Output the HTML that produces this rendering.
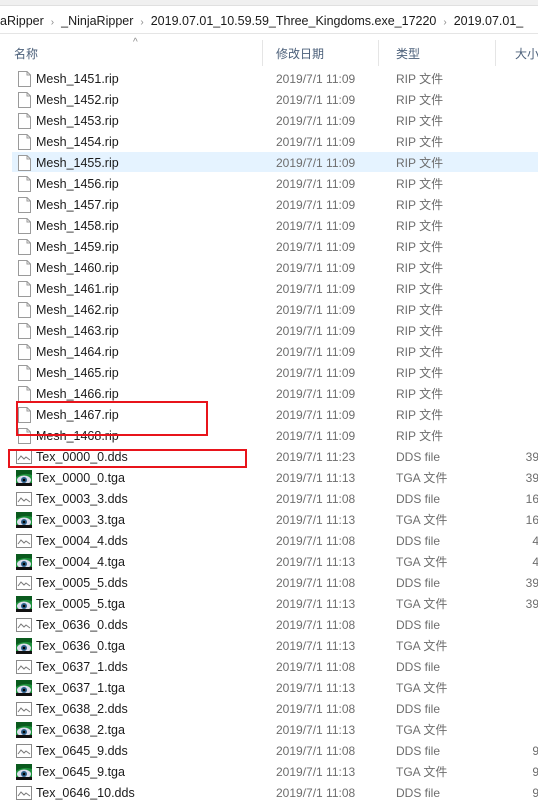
<!DOCTYPE html>
<html><head><meta charset="utf-8"><style>
body{margin:0;width:538px;height:807px;overflow:hidden;background:#fff;font-family:"Liberation Sans","Noto Sans CJK SC",sans-serif;font-size:12px;color:#1a1a1a;position:relative}
.a{position:absolute;white-space:nowrap;line-height:16px}
.r{position:absolute;left:0;width:538px;height:21px}
.n{position:absolute;left:36px;top:3px;line-height:16px;font-size:12.5px}
.d{position:absolute;left:276px;top:3px;color:#6d6d6d;line-height:16px}
.t{position:absolute;left:396px;top:3px;color:#6d6d6d;line-height:16px}
.s{position:absolute;right:-1px;top:3px;color:#6d6d6d;line-height:16px}
.ic{position:absolute;left:18px;top:3px;width:13px;height:16px}
.sep{position:absolute;top:40px;width:1px;height:26px;background:#e5e5e5}
.ch{color:#888;margin:0 7px;font-size:10px}
</style></head><body>
<div style="position:absolute;left:0;top:0;width:538px;height:5px;background:#f0f0f0;border-bottom:1px solid #e0e0e0"></div>
<div class="a" style="left:0;top:13px;font-size:12.5px">aRipper<span class="ch">›</span>_NinjaRipper<span class="ch">›</span>2019.07.01_10.59.59_Three_Kingdoms.exe_17220<span class="ch">›</span>2019.07.01_</div>
<div style="position:absolute;left:0;top:33px;width:538px;height:1px;background:#e5e5e5"></div>
<div class="a" style="left:133px;top:35px;color:#888;font-size:10px">^</div>
<div class="a" style="left:14px;top:46px;color:#4c607a">名称</div>
<div class="a" style="left:276px;top:46px;color:#4c607a">修改日期</div>
<div class="a" style="left:396px;top:46px;color:#4c607a">类型</div>
<div class="a" style="left:515px;top:46px;color:#4c607a">大小</div>
<div class="sep" style="left:262px"></div><div class="sep" style="left:378px"></div><div class="sep" style="left:495px"></div>
<div style="position:absolute;left:12px;top:152px;width:526px;height:20px;background:#e5f3ff"></div>
<svg width="0" height="0" style="position:absolute"><defs>
<symbol id="f" viewBox="0 0 13 16"><path d="M0.5 0.5H9L12.5 4V15.5H0.5Z" fill="#fff" stroke="#9a9a9a"/><path d="M9 0.5V4H12.5" fill="none" stroke="#9a9a9a"/></symbol>
<symbol id="g" viewBox="0 0 16 16"><rect x="0.5" y="1.5" width="15" height="13" fill="#fff" stroke="#8a8a8a"/><path d="M2 11L5 7L8 10L10 8L14 11" fill="none" stroke="#777"/></symbol>
<symbol id="e" viewBox="0 0 16 16"><rect width="16" height="16" fill="#1d8f3a"/><path d="M0 0H16V5Q8 2 0 7Z" fill="#0a5a1e"/><ellipse cx="8" cy="10" rx="7" ry="4.5" fill="#dde"/><circle cx="8" cy="10" r="3" fill="#2a5f8a"/><circle cx="8" cy="10" r="1.3" fill="#000"/><rect x="0" y="13" width="16" height="3" fill="#111"/></symbol>
</defs></svg>
<div id="rows">
<div class="r" style="top:68px"><svg class="ic"><use href="#f"/></svg><span class="n">Mesh_1451.rip</span><span class="d">2019/7/1 11:09</span><span class="t">RIP 文件</span></div>
<div class="r" style="top:89px"><svg class="ic"><use href="#f"/></svg><span class="n">Mesh_1452.rip</span><span class="d">2019/7/1 11:09</span><span class="t">RIP 文件</span></div>
<div class="r" style="top:110px"><svg class="ic"><use href="#f"/></svg><span class="n">Mesh_1453.rip</span><span class="d">2019/7/1 11:09</span><span class="t">RIP 文件</span></div>
<div class="r" style="top:131px"><svg class="ic"><use href="#f"/></svg><span class="n">Mesh_1454.rip</span><span class="d">2019/7/1 11:09</span><span class="t">RIP 文件</span></div>
<div class="r" style="top:152px"><svg class="ic"><use href="#f"/></svg><span class="n">Mesh_1455.rip</span><span class="d">2019/7/1 11:09</span><span class="t">RIP 文件</span></div>
<div class="r" style="top:173px"><svg class="ic"><use href="#f"/></svg><span class="n">Mesh_1456.rip</span><span class="d">2019/7/1 11:09</span><span class="t">RIP 文件</span></div>
<div class="r" style="top:194px"><svg class="ic"><use href="#f"/></svg><span class="n">Mesh_1457.rip</span><span class="d">2019/7/1 11:09</span><span class="t">RIP 文件</span></div>
<div class="r" style="top:215px"><svg class="ic"><use href="#f"/></svg><span class="n">Mesh_1458.rip</span><span class="d">2019/7/1 11:09</span><span class="t">RIP 文件</span></div>
<div class="r" style="top:236px"><svg class="ic"><use href="#f"/></svg><span class="n">Mesh_1459.rip</span><span class="d">2019/7/1 11:09</span><span class="t">RIP 文件</span></div>
<div class="r" style="top:257px"><svg class="ic"><use href="#f"/></svg><span class="n">Mesh_1460.rip</span><span class="d">2019/7/1 11:09</span><span class="t">RIP 文件</span></div>
<div class="r" style="top:278px"><svg class="ic"><use href="#f"/></svg><span class="n">Mesh_1461.rip</span><span class="d">2019/7/1 11:09</span><span class="t">RIP 文件</span></div>
<div class="r" style="top:299px"><svg class="ic"><use href="#f"/></svg><span class="n">Mesh_1462.rip</span><span class="d">2019/7/1 11:09</span><span class="t">RIP 文件</span></div>
<div class="r" style="top:320px"><svg class="ic"><use href="#f"/></svg><span class="n">Mesh_1463.rip</span><span class="d">2019/7/1 11:09</span><span class="t">RIP 文件</span></div>
<div class="r" style="top:341px"><svg class="ic"><use href="#f"/></svg><span class="n">Mesh_1464.rip</span><span class="d">2019/7/1 11:09</span><span class="t">RIP 文件</span></div>
<div class="r" style="top:362px"><svg class="ic"><use href="#f"/></svg><span class="n">Mesh_1465.rip</span><span class="d">2019/7/1 11:09</span><span class="t">RIP 文件</span></div>
<div class="r" style="top:383px"><svg class="ic"><use href="#f"/></svg><span class="n">Mesh_1466.rip</span><span class="d">2019/7/1 11:09</span><span class="t">RIP 文件</span></div>
<div class="r" style="top:404px"><svg class="ic"><use href="#f"/></svg><span class="n">Mesh_1467.rip</span><span class="d">2019/7/1 11:09</span><span class="t">RIP 文件</span></div>
<div class="r" style="top:425px"><svg class="ic"><use href="#f"/></svg><span class="n">Mesh_1468.rip</span><span class="d">2019/7/1 11:09</span><span class="t">RIP 文件</span></div>
<div class="r" style="top:446px"><svg class="ic" style="width:16px;left:16px"><use href="#g"/></svg><span class="n">Tex_0000_0.dds</span><span class="d">2019/7/1 11:23</span><span class="t">DDS file</span><span class="s">39</span></div>
<div class="r" style="top:467px"><svg class="ic" style="width:16px;left:16px"><use href="#e"/></svg><span class="n">Tex_0000_0.tga</span><span class="d">2019/7/1 11:13</span><span class="t">TGA 文件</span><span class="s">39</span></div>
<div class="r" style="top:488px"><svg class="ic" style="width:16px;left:16px"><use href="#g"/></svg><span class="n">Tex_0003_3.dds</span><span class="d">2019/7/1 11:08</span><span class="t">DDS file</span><span class="s">16</span></div>
<div class="r" style="top:509px"><svg class="ic" style="width:16px;left:16px"><use href="#e"/></svg><span class="n">Tex_0003_3.tga</span><span class="d">2019/7/1 11:13</span><span class="t">TGA 文件</span><span class="s">16</span></div>
<div class="r" style="top:530px"><svg class="ic" style="width:16px;left:16px"><use href="#g"/></svg><span class="n">Tex_0004_4.dds</span><span class="d">2019/7/1 11:08</span><span class="t">DDS file</span><span class="s">4</span></div>
<div class="r" style="top:551px"><svg class="ic" style="width:16px;left:16px"><use href="#e"/></svg><span class="n">Tex_0004_4.tga</span><span class="d">2019/7/1 11:13</span><span class="t">TGA 文件</span><span class="s">4</span></div>
<div class="r" style="top:572px"><svg class="ic" style="width:16px;left:16px"><use href="#g"/></svg><span class="n">Tex_0005_5.dds</span><span class="d">2019/7/1 11:08</span><span class="t">DDS file</span><span class="s">39</span></div>
<div class="r" style="top:593px"><svg class="ic" style="width:16px;left:16px"><use href="#e"/></svg><span class="n">Tex_0005_5.tga</span><span class="d">2019/7/1 11:13</span><span class="t">TGA 文件</span><span class="s">39</span></div>
<div class="r" style="top:614px"><svg class="ic" style="width:16px;left:16px"><use href="#g"/></svg><span class="n">Tex_0636_0.dds</span><span class="d">2019/7/1 11:08</span><span class="t">DDS file</span></div>
<div class="r" style="top:635px"><svg class="ic" style="width:16px;left:16px"><use href="#e"/></svg><span class="n">Tex_0636_0.tga</span><span class="d">2019/7/1 11:13</span><span class="t">TGA 文件</span></div>
<div class="r" style="top:656px"><svg class="ic" style="width:16px;left:16px"><use href="#g"/></svg><span class="n">Tex_0637_1.dds</span><span class="d">2019/7/1 11:08</span><span class="t">DDS file</span></div>
<div class="r" style="top:677px"><svg class="ic" style="width:16px;left:16px"><use href="#e"/></svg><span class="n">Tex_0637_1.tga</span><span class="d">2019/7/1 11:13</span><span class="t">TGA 文件</span></div>
<div class="r" style="top:698px"><svg class="ic" style="width:16px;left:16px"><use href="#g"/></svg><span class="n">Tex_0638_2.dds</span><span class="d">2019/7/1 11:08</span><span class="t">DDS file</span></div>
<div class="r" style="top:719px"><svg class="ic" style="width:16px;left:16px"><use href="#e"/></svg><span class="n">Tex_0638_2.tga</span><span class="d">2019/7/1 11:13</span><span class="t">TGA 文件</span></div>
<div class="r" style="top:740px"><svg class="ic" style="width:16px;left:16px"><use href="#g"/></svg><span class="n">Tex_0645_9.dds</span><span class="d">2019/7/1 11:08</span><span class="t">DDS file</span><span class="s">9</span></div>
<div class="r" style="top:761px"><svg class="ic" style="width:16px;left:16px"><use href="#e"/></svg><span class="n">Tex_0645_9.tga</span><span class="d">2019/7/1 11:13</span><span class="t">TGA 文件</span><span class="s">9</span></div>
<div class="r" style="top:782px"><svg class="ic" style="width:16px;left:16px"><use href="#g"/></svg><span class="n">Tex_0646_10.dds</span><span class="d">2019/7/1 11:08</span><span class="t">DDS file</span><span class="s">9</span></div>
</div>
<div style="position:absolute;left:16px;top:401px;width:188px;height:31px;border:2px solid #e8141b"></div>
<div style="position:absolute;left:8px;top:449px;width:235px;height:15px;border:2px solid #e8141b"></div>
</body></html>
